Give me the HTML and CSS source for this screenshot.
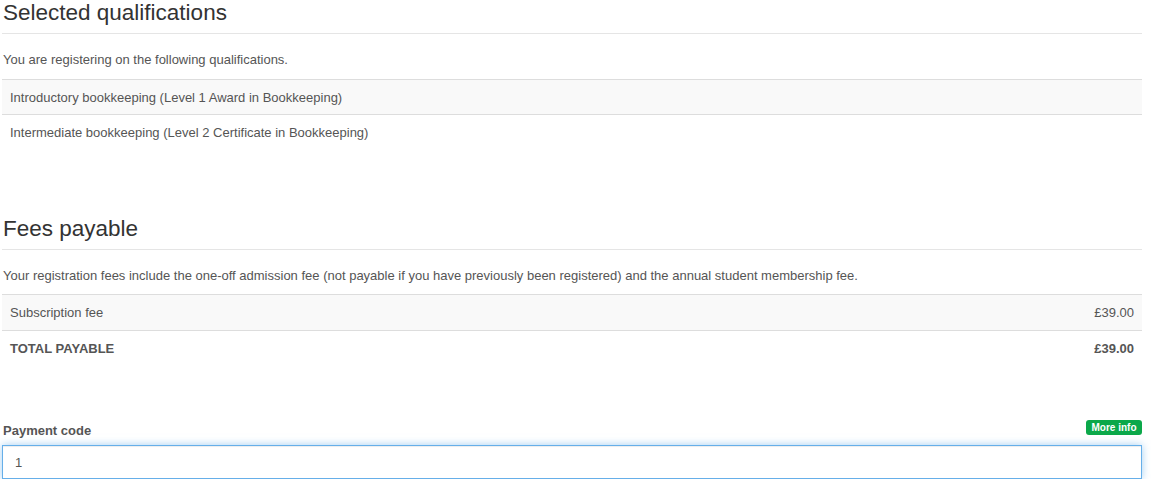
FILE: index.html
```html
<!DOCTYPE html>
<html>
<head>
<meta charset="utf-8">
<link rel="stylesheet" href="styles.css">
</head>
<body>
<div class="page">
  <section class="section section-quals">
    <h2 class="title">Selected qualifications</h2>
    <p class="intro">You are registering on the following qualifications.</p>
    <table class="table">
      <tr><td>Introductory bookkeeping (Level 1 Award in Bookkeeping)</td></tr>
      <tr><td>Intermediate bookkeeping (Level 2 Certificate in Bookkeeping)</td></tr>
    </table>
  </section>
  <section class="section section-fees">
    <h2 class="title">Fees payable</h2>
    <p class="intro">Your registration fees include the one-off admission fee (not payable if you have previously been registered) and the annual student membership fee.</p>
    <table class="table">
      <tr><td>Subscription fee</td><td class="amount">£39.00</td></tr>
      <tr class="total"><td>TOTAL PAYABLE</td><td class="amount">£39.00</td></tr>
    </table>
  </section>
  <div class="field">
    <div class="field-head">
      <label class="field-label" for="code">Payment code</label>
      <span class="badge">More info</span>
    </div>
    <input class="field-input" id="code" type="text" value="1">
  </div>
</div>
</body>
</html>
```

FILE: styles.css
```css
html, body {
  margin: 0;
  padding: 0;
  background: #fff;
}
.page {
  padding: 0 9px 0 2px;
  font-family: "Liberation Sans", Arial, sans-serif;
  font-size: 13px;
  line-height: 1.42857;
  color: #555;
}
.section-quals {
  margin-bottom: 66px;
}
.section-fees {
  margin-bottom: 57px;
}
.title {
  margin: 0;
  font-size: 22.5px;
  font-weight: normal;
  line-height: 26px;
  color: #333;
  padding: 0 0 7px 1px;
  border-bottom: 1px solid #e5e5e5;
}
.intro {
  margin: 17px 0 9px 1px;
}
.table {
  width: 100%;
  border-collapse: collapse;
}
.table td {
  padding: 9px 8px 7px;
  border-top: 1px solid #ddd;
  vertical-align: top;
}
.table tr:nth-child(odd) td {
  background: #f9f9f9;
}
.table .amount {
  text-align: right;
}
.table .total td {
  font-weight: bold;
}
.field-head {
  display: flex;
  justify-content: space-between;
  align-items: flex-start;
  margin-bottom: 4px;
}
.field-label {
  font-weight: bold;
  padding-left: 1px;
  line-height: 18.57px;
}
.badge {
  margin-top: -2px;
  background: #0ba84a;
  color: #fff;
  font-weight: bold;
  font-size: 10px;
  line-height: 15px;
  padding: 0 5px;
  border-radius: 3px;
  width: 46px;
  text-align: center;
}
.field-input {
  display: block;
  box-sizing: border-box;
  width: 100%;
  height: 34px;
  margin: 0;
  padding: 7px 12px 5px;
  font-family: "Liberation Sans", Arial, sans-serif;
  font-size: 13px;
  color: #555;
  background: #fff;
  border: 1px solid #66afe9;
  border-radius: 0;
  outline: 0;
  box-shadow: inset 0 1px 1px rgba(0,0,0,.075), 0 0 8px rgba(102,175,233,.6);
}
```
